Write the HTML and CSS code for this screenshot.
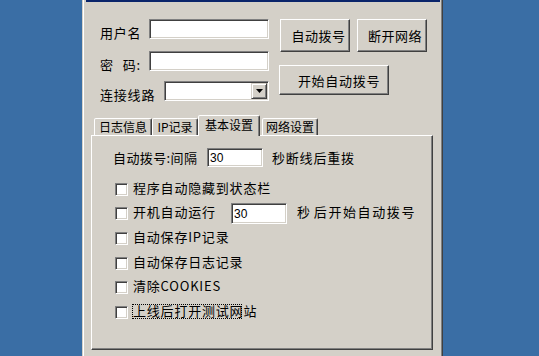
FILE: index.html
```html
<!DOCTYPE html>
<html lang="zh-CN">
<head>
<meta charset="utf-8">
<title>自动拨号</title>
<link rel="stylesheet" href="styles.css">
</head>
<body>
<div class="window">
  <div class="frame">
    <div class="titlebar"></div>
    <div class="top">
      <div class="form">
        <div class="frow">
          <span class="lbl w49">用户名</span>
          <span class="edit e120"></span>
        </div>
        <div class="frow r2">
          <span class="lbl w49">密<span class="gap">码:</span></span>
          <span class="edit e120"></span>
        </div>
        <div class="frow r3">
          <span class="lbl w64">连接线路</span>
          <span class="edit combo">
            <span class="combo-btn">
              <svg width="7" height="4" viewBox="0 0 7 4"><polygon points="0,0 7,0 3.5,4" fill="#000"/></svg>
            </span>
          </span>
        </div>
      </div>
      <div class="actions">
        <div class="btnrow">
          <div class="btn b70 pl7">自动拨号</div>
          <div class="btn b70 pl6">断开网络</div>
        </div>
        <div class="btn b110">开始自动拨号</div>
      </div>
    </div>
    <div class="tabs">
      <div class="tab t58">日志信息</div>
      <div class="tab t46">IP记录</div>
      <div class="tab t62 active">基本设置</div>
      <div class="tab t56 tgap">网络设置</div>
    </div>
    <div class="panel">
      <div class="prow">
        <span class="plabel">自动拨号:间隔</span>
        <span class="edit num e56">30</span>
        <span class="after">秒断线后重拨</span>
      </div>
      <div class="checks">
        <div class="crow"><span class="cb"></span><span class="ctext">程序自动隐藏到状态栏</span></div>
        <div class="crow">
          <span class="cb"></span><span class="ctext w98">开机自动运行</span>
          <span class="edit num e56 h21">30</span>
          <span class="ctext after2">秒<span class="spaced">后开始自动拨号</span></span>
        </div>
        <div class="crow"><span class="cb"></span><span class="ctext">自动保存IP记录</span></div>
        <div class="crow"><span class="cb"></span><span class="ctext">自动保存日志记录</span></div>
        <div class="crow"><span class="cb"></span><span class="ctext">清除COOKIES</span></div>
        <div class="crow"><span class="cb"></span><span class="ctext focus">上线后打开测试网站</span></div>
      </div>
    </div>
  </div>
</div>
</body>
</html>
```

FILE: styles.css
```css
html, body {
  margin: 0;
  padding: 0;
}

body {
  background: #3a6ea5;
  width: 539px;
  height: 356px;
  overflow: hidden;
  font-family: "Noto Sans CJK SC", sans-serif;
  font-size: 13px;
  color: #000;
}

.window {
  margin-left: 82px;
  width: 361px;
  height: 356px;
  box-sizing: border-box;
  background: #d4d0c8;
  border-left: 1px solid #d4d0c8;
  border-right: 1px solid #404040;
}

.frame {
  height: 100%;
  box-sizing: border-box;
  border-left: 1px solid #fff;
  border-right: 1px solid #808080;
}

.titlebar {
  height: 2px;
  margin: 0 1px 0 2px;
  background: #0a246a;
}

.top {
  display: flex;
  padding: 17px 0 0 16px;
}

.form {
  width: 169px;
  display: flex;
  flex-direction: column;
}

.frow {
  display: flex;
  align-items: flex-end;
  height: 20px;
}

.r2 { margin-top: 12px; }
.r3 { margin-top: 10px; }

.lbl {
  line-height: 13px;
  letter-spacing: 0.8px;
  white-space: nowrap;
  flex: none;
}

.gap { margin-left: 9px; }

.w49 { width: 49px; }
.w64 { width: 64px; }

.edit {
  box-sizing: border-box;
  background: #fff;
  border: 1px solid;
  border-color: #808080 #fff #fff #808080;
  box-shadow: inset 1px 1px #404040, inset -1px -1px #d4d0c8;
  flex: none;
}

.e120 { width: 120px; height: 20px; }

.combo {
  width: 105px;
  height: 20px;
  padding: 1px;
  display: flex;
  justify-content: flex-end;
}

.combo-btn {
  width: 16px;
  height: 16px;
  box-sizing: border-box;
  background: #d4d0c8;
  border: 1px solid;
  border-color: #d4d0c8 #404040 #404040 #d4d0c8;
  box-shadow: inset 1px 1px #fff, inset -1px -1px #808080;
  display: flex;
  align-items: center;
  justify-content: center;
}

.combo-btn svg { display: block; }

.actions {
  margin-left: 11px;
  display: flex;
  flex-direction: column;
  align-items: flex-start;
}

.btnrow {
  display: flex;
  gap: 7px;
}

.btn {
  box-sizing: border-box;
  background: #d4d0c8;
  border: 1px solid;
  border-color: #fff #404040 #404040 #fff;
  box-shadow: inset -1px -1px #808080;
  display: flex;
  align-items: center;
  justify-content: center;
  line-height: 15px;
  letter-spacing: 0.5px;
  white-space: nowrap;
}

.b70 { width: 70px; height: 33px; }
.pl7 { padding-left: 7px; }
.pl6 { padding-left: 6px; }

.b110 {
  width: 110px;
  height: 30px;
  margin-top: 13px;
  margin-left: -1px;
  padding-left: 10px;
  letter-spacing: 0.7px;
}

.tabs {
  display: flex;
  align-items: flex-end;
  height: 21px;
  margin: 14px 0 -1px 10px;
}

.tab {
  box-sizing: border-box;
  height: 17px;
  margin-bottom: 1px;
  border: 1px solid;
  border-bottom: none;
  border-color: #fff #404040 transparent #fff;
  box-shadow: inset -1px 0 #808080;
  border-radius: 2px 2px 0 0;
  background: #d4d0c8;
  font-size: 12px;
  line-height: 14px;
  display: flex;
  align-items: center;
  justify-content: center;
  white-space: nowrap;
}

.t58 { width: 58px; }
.t46 { width: 46px; }
.t62 { width: 62px; }
.t56 { width: 56px; }
.tgap { margin-left: 2px; }

.tab.active {
  height: 21px;
  margin-bottom: 0;
  padding-bottom: 3px;
  position: relative;
  z-index: 1;
}

.panel {
  margin-left: 7px;
  width: 342px;
  height: 215px;
  box-sizing: border-box;
  border: 1px solid;
  border-color: #fff #404040 #404040 #fff;
  box-shadow: inset -1px -1px #808080;
}

.prow {
  display: flex;
  align-items: center;
  height: 19px;
  margin: 12px 0 0 21px;
}

.plabel {
  width: 94px;
  flex: none;
  letter-spacing: 0.4px;
  white-space: nowrap;
  line-height: 15px;
}

.num {
  font-family: "Liberation Sans", sans-serif;
  font-size: 12px;
  padding-left: 2px;
  display: flex;
  align-items: center;
}

.e56 { width: 56px; height: 19px; }
.h21 { height: 21px; }

.after {
  margin-left: 9px;
  letter-spacing: 0.8px;
  white-space: nowrap;
  line-height: 15px;
}

.checks {
  margin: 10px 0 0 23px;
}

.crow {
  height: 24.66px;
  display: flex;
  align-items: center;
}

.cb {
  width: 13px;
  height: 13px;
  box-sizing: border-box;
  flex: none;
  background: #fff;
  border: 1px solid;
  border-color: #808080 #fff #fff #808080;
  box-shadow: inset 1px 1px #404040, inset -1px -1px #d4d0c8;
  margin-right: 5px;
}

.ctext {
  letter-spacing: 0.8px;
  line-height: 15px;
  margin-bottom: 4px;
  white-space: nowrap;
}

.w98 { width: 98px; flex: none; }

.after2 { margin-left: 10px; }

.spaced {
  margin-left: 3px;
  letter-spacing: 1.6px;
}

.focus { position: relative; }

.focus::after {
  content: "";
  position: absolute;
  left: -1px;
  top: 1px;
  width: 110px;
  height: 15px;
  box-sizing: border-box;
  border: 1px dotted #000;
}
```
